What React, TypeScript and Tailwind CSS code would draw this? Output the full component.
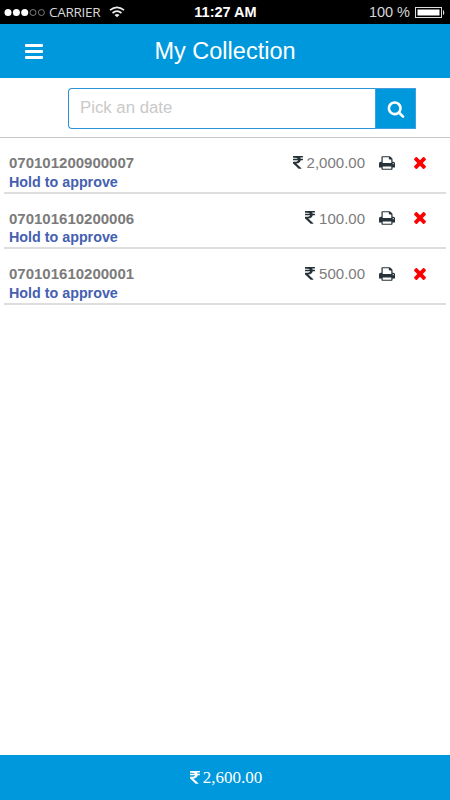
import React from 'react';

interface Collection {
    id: string;
    amount: string;
}

const collections: Collection[] = [
    { id: '070101200900007', amount: '2,000.00' },
    { id: '070101610200006', amount: '100.00' },
    { id: '070101610200001', amount: '500.00' },
];

function RupeeIcon() {
    return (
        <svg className="w-[10px] h-[14px]" fill="currentColor" viewBox="448 128 900 1536" preserveAspectRatio="none">
            <path d="M1345 470v102q0 14-9 23t-23 9h-168q-23 144-129 234t-276 110q167 178 459 536 14 16 4 34-8 18-29 18h-195q-16 0-25-12-306-367-498-571-9-9-9-22v-127q0-13 9.500-22.500t22.500-9.500h112q132 0 212.500-43t102.500-125h-427q-14 0-23-9t-9-23v-102q0-14 9-23t23-9h413q-57-113-268-113h-145q-13 0-22.500-9.500t-9.500-22.500v-133q0-14 9-23t23-9h832q14 0 23 9t9 23v102q0 14-9 23t-23 9h-233q47 61 64 144h171q14 0 23 9t9 23z" />
        </svg>
    );
}

function SearchIcon() {
    return (
        <svg className="w-[18px] h-[18px] text-white" fill="currentColor" viewBox="0 0 1792 1792">
            <path d="M1216 832q0-185-131.5-316.500t-316.500-131.500-316.500 131.500-131.500 316.500 131.500 316.500 316.500 131.500 316.500-131.500 131.500-316.500zm512 832q0 52-38 90t-90 38q-54 0-90-38l-343-342q-179 124-399 124-143 0-273.500-55.500t-225-150-150-225-55.500-273.500 55.500-273.500 150-225 225-150 273.500-55.500 273.500 55.500 225 150 150 225 55.500 273.500q0 220-124 399l343 343q37 37 37 90z" />
        </svg>
    );
}

function PrintIcon() {
    return (
        <svg className="w-4 h-4 text-[#263238]" fill="currentColor" viewBox="64 0 1664 1792" preserveAspectRatio="none">
            <path d="M448 1536h896v-256h-896v256zm0-640h896v-384h-160q-40 0-68-28t-28-68v-160h-640v640zm1152 64q0-26-19-45t-45-19-45 19-19 45 19 45 45 19 45-19 19-45zm128 0v416q0 13-9.500 22.500t-22.500 9.500h-224v160q0 40-28 68t-68 28h-960q-40 0-68-28t-28-68v-160h-224q-13 0-22.500-9.500t-9.500-22.500v-416q0-79 56.500-135.500t135.500-56.500h64v-544q0-40 28-68t68-28h672q40 0 88 20t76 48l152 152q28 28 48 76t20 88v256h64q79 0 135.500 56.500t56.500 135.500z" />
        </svg>
    );
}

function RemoveIcon() {
    return (
        <svg className="w-[18px] h-[18px] text-[#ff0000]" fill="currentColor" viewBox="0 64 1792 1792">
            <path d="M1490 1322q0 40-28 68l-136 136q-28 28-68 28t-68-28l-294-294-294 294q-28 28-68 28t-68-28l-136-136q-28-28-28-68t28-68l294-294-294-294q-28-28-28-68t28-68l136-136q28-28 68-28t68 28l294 294 294-294q28-28 68-28t68 28l136 136q28 28 28 68t-28 68l-294 294 294 294q28 28 28 68z" />
        </svg>
    );
}

function StatusBar() {
    return (
        <div className="h-6 bg-black text-[#d8d8d8] grid grid-cols-[145px_1fr_145px] items-center pl-1 pr-[5px]">
            {/* Signal and carrier */}
            <div className="flex items-center">
                <svg className="w-[42px] h-[9px]" viewBox="0 0 42 9">
                    <circle cx="4" cy="4.500" r="3.500" fill="#fff" />
                    <circle cx="12.400" cy="4.500" r="3.500" fill="#fff" />
                    <circle cx="20.700" cy="4.500" r="3.500" fill="#fff" />
                    <circle cx="29" cy="4.500" r="3" fill="none" stroke="#999" strokeWidth="0.800" />
                    <circle cx="37.400" cy="4.500" r="3" fill="none" stroke="#999" strokeWidth="0.800" />
                </svg>
                <span className="ml-[3px] w-[52px] font-['Open_Sans',sans-serif] text-[13.5px] tracking-[-0.3px] leading-[18px] whitespace-nowrap">CARRIER</span>
                <svg className="ml-[8px] w-4 h-[12px]" viewBox="0 0 16 12" fill="none" stroke="#eee" strokeWidth="1.700">
                    <path d="M1 4.200Q8-1.600 15 4.200" />
                    <path d="M3.500 7Q8 3.200 12.500 7" />
                    <path d="M8 11.300L5.500 8.900Q8 7.200 10.500 8.900Z" fill="#eee" stroke="none" />
                </svg>
            </div>
            <div className="pl-[2px] text-center text-[14.5px] leading-5 font-bold text-white">11:27 AM</div>
            {/* Battery */}
            <div className="flex items-center justify-end">
                <span className="text-[14.5px] leading-5">100 %</span>
                <svg className="ml-[5px] w-[30px] h-[11px]" viewBox="0 0 30 11">
                    <rect x="0.500" y="0.500" width="26" height="10" fill="none" stroke="#ddd" />
                    <rect x="2.500" y="2.500" width="22" height="6" fill="#fff" />
                    <path d="M28 3h0.500q1.500 2.500 0 5H28z" fill="#ddd" />
                </svg>
            </div>
        </div>
    );
}

export default function App() {
    return (
        <div className="w-full h-screen flex flex-col bg-white font-['Liberation_Sans',Arial,sans-serif] overflow-hidden">
            <StatusBar />

            {/* Header */}
            <header className="h-[54px] bg-[#0098dc] grid grid-cols-[50px_1fr_50px] items-center text-white">
                <button className="ml-[25px] w-[18px] flex flex-col gap-[3px]" aria-label="Menu">
                    <span className="h-[3px] w-full bg-white rounded-[1px]" />
                    <span className="h-[3px] w-full bg-white rounded-[1px]" />
                    <span className="h-[3px] w-full bg-white rounded-[1px]" />
                </button>
                <h1 className="pt-[2px] text-center text-[23.5px] leading-none">My Collection</h1>
            </header>

            {/* Date filter */}
            <div className="h-[60px] pt-[10px] pl-[68px] pr-[34px] border-b border-[#c8c8c8]">
                <div className="h-[41px] flex">
                    <input
                        type="text"
                        placeholder="Pick an date"
                        className="flex-1 min-w-0 pl-[11px] pb-[2px] border border-r-0 border-[#2b93d8] rounded-l-[4px] text-[16.8px] placeholder:text-[#c9c9c9] outline-none"
                    />
                    <button className="w-[41px] bg-[#0098dc] border border-[#3d9fe0] flex items-center justify-center" aria-label="Search">
                        <SearchIcon />
                    </button>
                </div>
            </div>

            {/* Collections */}
            <ul className="flex-1 px-1">
                {collections.map((item) => (
                    <li key={item.id} className="h-[55.7px] pt-[15px] px-[5px] flex justify-between border-b-2 border-[#dedede]">
                        <div className="leading-[19.5px] font-bold">
                            <p className="text-[15px] text-[#7b7b7b]">{item.id}</p>
                            <p className="text-[14.3px] text-[#4460b0]">Hold to approve</p>
                        </div>
                        <div className="h-[19px] flex items-center pr-[12px]">
                            <span className="text-[#263238]">
                                <RupeeIcon />
                            </span>
                            <span className="ml-1 text-[15px] leading-[19px] text-[#7b7b7b]">{item.amount}</span>
                            <span className="ml-[14px]">
                                <PrintIcon />
                            </span>
                            <span className="ml-[16px]">
                                <RemoveIcon />
                            </span>
                        </div>
                    </li>
                ))}
            </ul>

            {/* Total */}
            <footer className="h-[45px] pl-[2px] bg-[#0098dc] flex items-center justify-center gap-[3px] text-white">
                <RupeeIcon />
                <span className="font-['Liberation_Serif',serif] text-[17px]">2,600.00</span>
            </footer>
        </div>
    );
}
